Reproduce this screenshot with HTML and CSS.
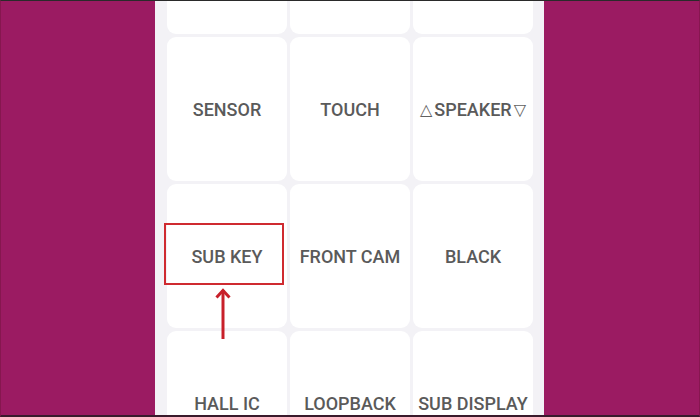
FILE: index.html
```html
<!DOCTYPE html>
<html>
<head>
<meta charset="utf-8">
<link rel="stylesheet" href="styles.css">
</head>
<body>
<div class="frame">
  <div class="phone">
    <div class="grid">
      <div class="card"></div>
      <div class="card"></div>
      <div class="card"></div>
      <div class="card">SENSOR</div>
      <div class="card">TOUCH</div>
      <div class="card"><span class="tri">△</span>SPEAKER<span class="tri">▽</span></div>
      <div class="card">SUB KEY</div>
      <div class="card">FRONT CAM</div>
      <div class="card">BLACK</div>
      <div class="card">HALL IC</div>
      <div class="card">LOOPBACK</div>
      <div class="card">SUB DISPLAY</div>
    </div>
  </div>
  <div class="highlight"></div>
  <svg class="arrow" width="20" height="56" viewBox="0 0 20 56">
    <path d="M10 3 V52" stroke="#c8202a" stroke-width="3" fill="none"/>
    <path d="M3.5 10.5 L10 3.5 L16.5 10.5" stroke="#c8202a" stroke-width="3" fill="none" stroke-linejoin="miter"/>
  </svg>
</div>
</body>
</html>
```
FILE: styles.css
```css
html, body {
  margin: 0;
  padding: 0;
}
body {
  width: 700px;
  height: 417px;
  overflow: hidden;
  background: #9b1b62;
}
.frame {
  position: relative;
  width: 700px;
  height: 417px;
  box-sizing: border-box;
  border-top: 1px solid #2a2a2a;
  border-bottom: 2px solid #3a1a2c;
  border-left: 1px solid #86174f;
  border-right: 1px solid #86174f;
  overflow: hidden;
}
.phone {
  margin-left: 154px;
  width: 389px;
  height: 100%;
  background: #f3f2f6;
  overflow: hidden;
  box-sizing: border-box;
  padding-left: 12px;
}
.grid {
  margin-top: -111px;
  display: grid;
  grid-template-columns: repeat(3, 120px);
  grid-auto-rows: 144px;
  gap: 3px;
}
.card {
  background: #ffffff;
  border-radius: 9px;
  display: flex;
  align-items: center;
  justify-content: center;
  font-family: Roboto, "Liberation Sans", sans-serif;
  font-weight: 500;
  font-size: 18px;
  color: #5a5a5a;
  white-space: nowrap;
}
.tri {
  font-family: "DejaVu Sans", sans-serif;
  font-weight: normal;
  font-size: 16px;
  color: #606060;
  margin: 0 2px;
}
.highlight {
  position: absolute;
  left: 163px;
  top: 222px;
  width: 120px;
  height: 62px;
  box-sizing: border-box;
  border: 2px solid #cf2a30;
}
.arrow {
  position: absolute;
  left: 212px;
  top: 286px;
}
```
